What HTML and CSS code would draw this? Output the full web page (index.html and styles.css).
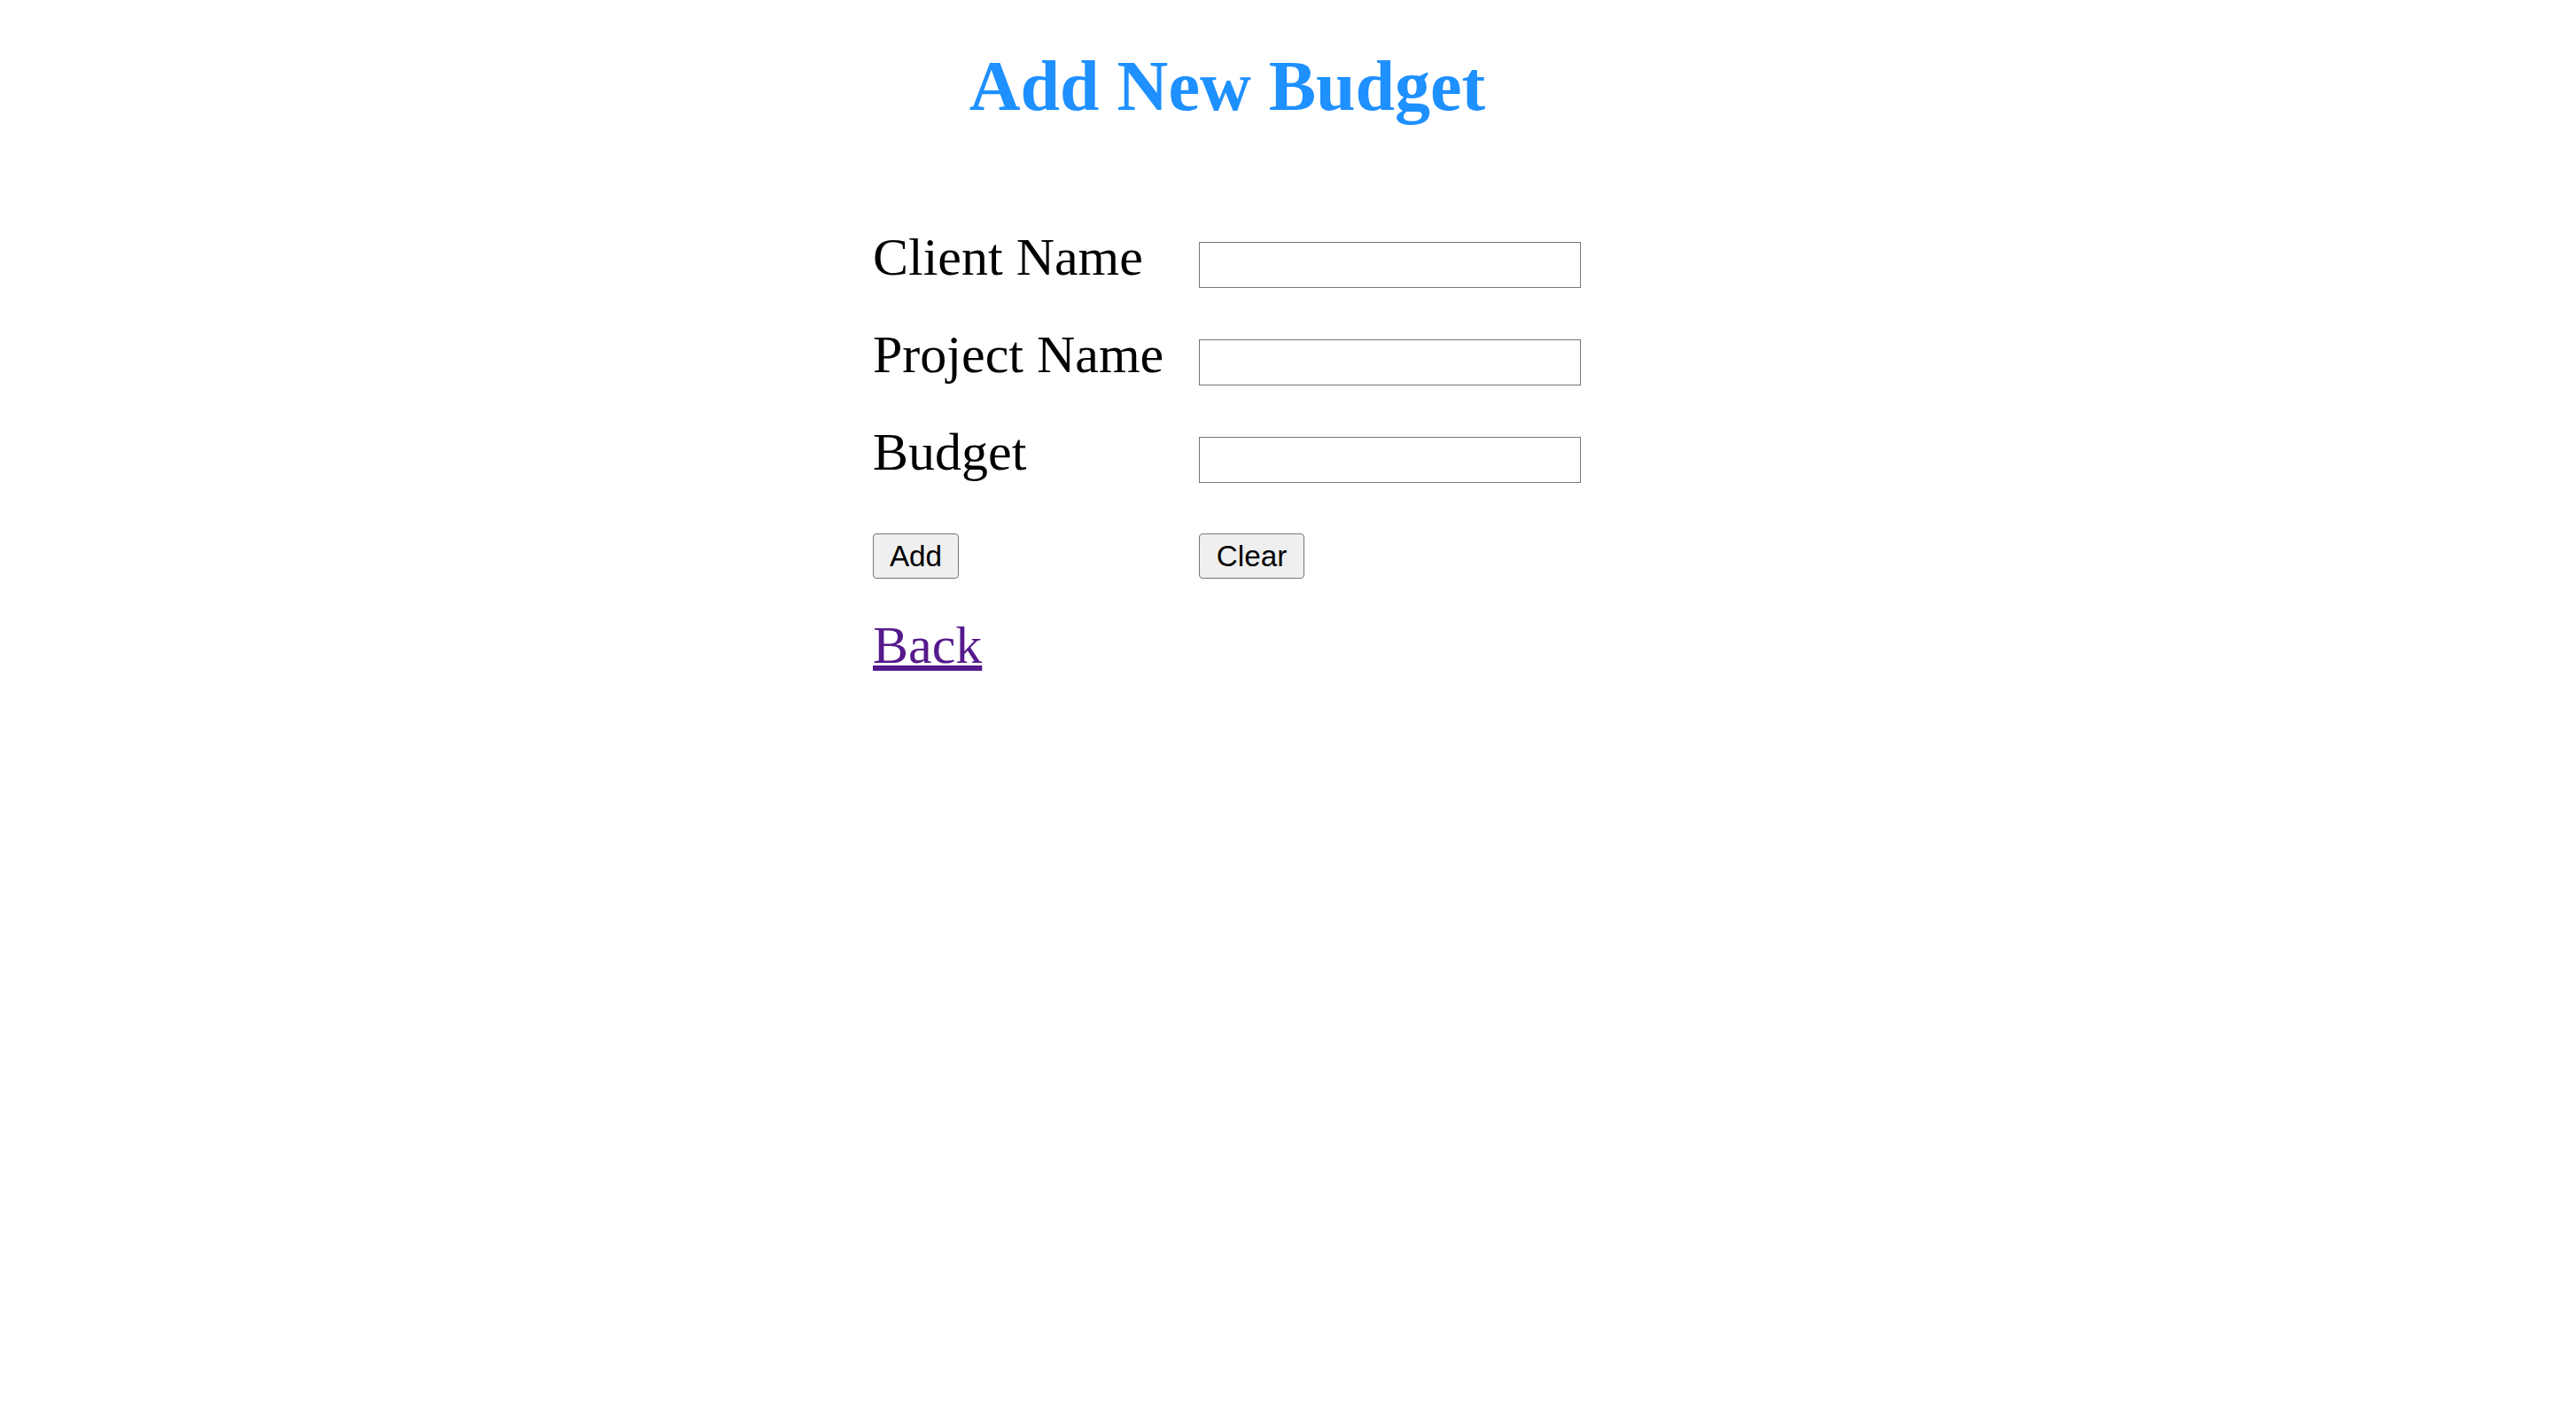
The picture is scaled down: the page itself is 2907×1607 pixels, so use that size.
FILE: index.html
```html
<!DOCTYPE html>
<html lang="en">
<head>
<meta charset="utf-8">
<title>Add New Budget</title>
<link rel="stylesheet" href="styles.css">
</head>
<body>
<div class="page">
  <h1 class="title">Add New Budget</h1>
  <form class="form">
    <div class="rows">
      <div class="row">
        <label class="label" for="client">Client Name</label>
        <input class="field" id="client" type="text">
      </div>
      <div class="row">
        <label class="label" for="project">Project Name</label>
        <input class="field" id="project" type="text">
      </div>
      <div class="row">
        <label class="label" for="budget">Budget</label>
        <input class="field" id="budget" type="text">
      </div>
    </div>
    <div class="actions">
      <div class="action-cell"><button type="button" class="btn btn-add">Add</button></div>
      <button type="reset" class="btn btn-clear">Clear</button>
    </div>
    <a class="back" href="#">Back</a>
  </form>
</div>
</body>
</html>
```
FILE: styles.css
```css
html, body {
  margin: 0;
  padding: 0;
  background: #ffffff;
}

body {
  font-family: "Liberation Serif", "Times New Roman", serif;
  color: #000000;
}

.page {
  padding: 0 20px;
}

.title {
  width: 2730px;
  margin: 53px 0 0 0;
  text-align: center;
  font-size: 80px;
  line-height: 89px;
  font-weight: bold;
  color: #1e90ff;
}

.form {
  margin: 114px 0 0 965px;
  display: flex;
  flex-direction: column;
  align-items: flex-start;
}

.rows {
  display: flex;
  flex-direction: column;
  gap: 41px;
}

.row {
  display: flex;
  align-items: flex-end;
  height: 69px;
}

.label {
  width: 368px;
  font-size: 60px;
  line-height: 69px;
}

.field {
  width: 431px;
  height: 52px;
  box-sizing: border-box;
  border: 1px solid #767676;
  border-radius: 0;
  margin: 0;
  padding: 2px 4px;
  font-family: "Liberation Sans", Arial, sans-serif;
  font-size: 33px;
  background: #ffffff;
}

.actions {
  display: flex;
  margin-top: 57px;
}

.action-cell {
  width: 368px;
}

.btn {
  height: 51px;
  box-sizing: border-box;
  margin: 0;
  padding: 0;
  border: 1px solid #767676;
  border-radius: 4px;
  background: #efefef;
  color: #000000;
  font-family: "Liberation Sans", Arial, sans-serif;
  font-size: 33.3px;
  text-align: center;
}

.btn-add {
  width: 97px;
}

.btn-clear {
  width: 119px;
}

.back {
  margin-top: 41px;
  font-size: 60px;
  line-height: 69px;
  color: #551a8b;
  text-decoration: underline;
  text-decoration-thickness: 6px;
  text-underline-offset: 3px;
}
```
